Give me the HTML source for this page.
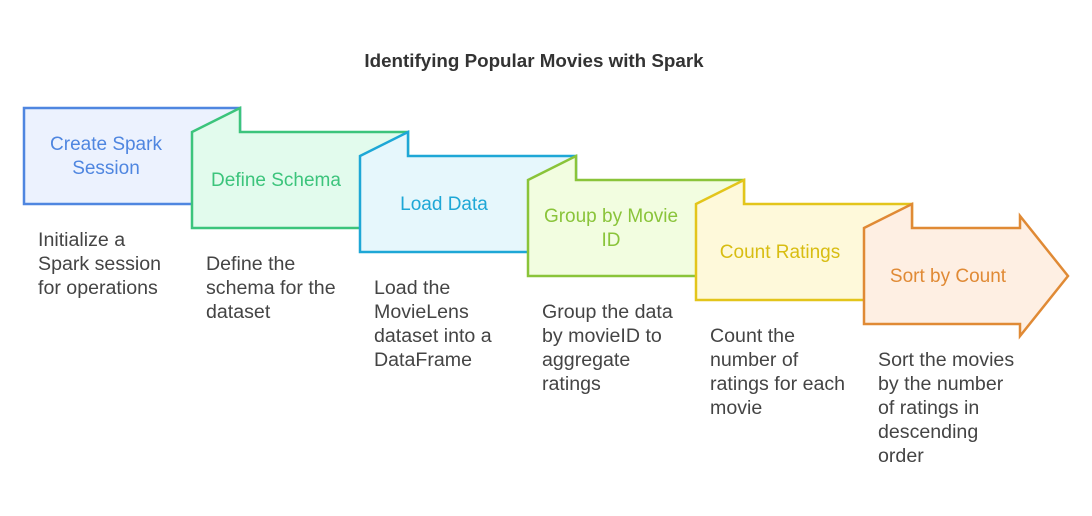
<!DOCTYPE html>
<html><head><meta charset="utf-8"><style>
body{margin:0;width:1092px;height:516px;background:#fff;overflow:hidden;font-family:"Liberation Sans",sans-serif}
svg{position:absolute;left:0;top:0}
</style></head><body>
<svg width="1092" height="516" viewBox="0 0 1092 516" font-family="Liberation Sans, sans-serif">
<text x="534" y="67" text-anchor="middle" font-size="18.8" font-weight="bold" fill="#333">Identifying Popular Movies with Spark</text>
<g stroke-width="2.5" stroke-linejoin="miter">
<rect x="24" y="108" width="216" height="96" fill="#ecf2fe" stroke="#4f86e0"/>
<polygon points="192,132 240,108 240,132 408,132 408,228 192,228" fill="#e2fbed" stroke="#3cc47c"/>
<polygon points="360,156 408,132 408,156 576,156 576,252 360,252" fill="#e6f7fc" stroke="#1ea7d6"/>
<polygon points="528,180 576,156 576,180 744,180 744,276 528,276" fill="#f2fde0" stroke="#8ac43a"/>
<polygon points="696,204 744,180 744,204 912,204 912,300 696,300" fill="#fef9da" stroke="#e3c51b"/>
<polygon points="864,228 912,204 912,228 1020,228 1020,216 1068,276 1020,336 1020,324 864,324" fill="#feefe3" stroke="#e08a35"/>
</g>
<g font-size="19" text-anchor="middle">
<text x="106" y="150" fill="#4f86e0">Create Spark</text>
<text x="106" y="174" fill="#4f86e0">Session</text>
<text x="276" y="186" fill="#3cc47c">Define Schema</text>
<text x="444" y="210" fill="#1ea7d6">Load Data</text>
<text x="611" y="222" fill="#8ac43a">Group by Movie</text>
<text x="611" y="246" fill="#8ac43a">ID</text>
<text x="780" y="258" fill="#d8bd12">Count Ratings</text>
<text x="948" y="282" fill="#e08a35">Sort by Count</text>
</g>
<g font-size="19.6" fill="#444">
<text x="38" y="246">Initialize a</text><text x="38" y="270">Spark session</text><text x="38" y="294">for operations</text>
<text x="206" y="270">Define the</text><text x="206" y="294">schema for the</text><text x="206" y="318">dataset</text>
<text x="374" y="294">Load the</text><text x="374" y="318">MovieLens</text><text x="374" y="342">dataset into a</text><text x="374" y="366">DataFrame</text>
<text x="542" y="318">Group the data</text><text x="542" y="342">by movieID to</text><text x="542" y="366">aggregate</text><text x="542" y="390">ratings</text>
<text x="710" y="342">Count the</text><text x="710" y="366">number of</text><text x="710" y="390">ratings for each</text><text x="710" y="414">movie</text>
<text x="878" y="366">Sort the movies</text><text x="878" y="390">by the number</text><text x="878" y="414">of ratings in</text><text x="878" y="438">descending</text><text x="878" y="462">order</text>
</g>
</svg>
</body></html>
